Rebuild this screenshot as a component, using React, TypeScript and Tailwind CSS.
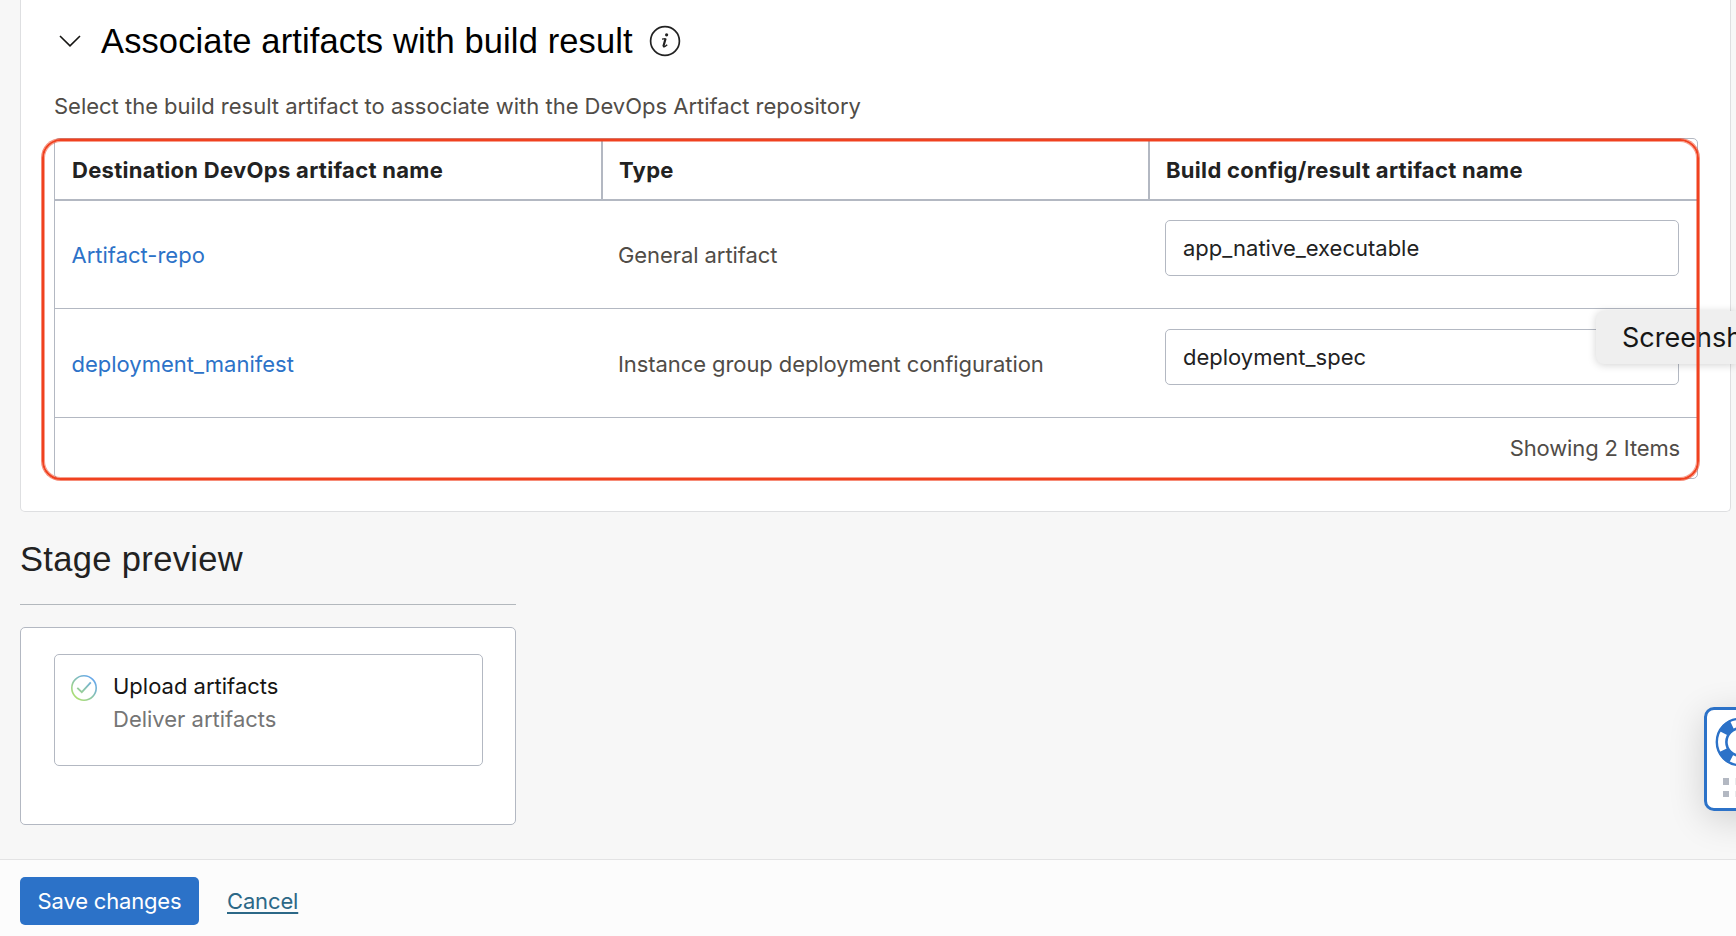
import React from "react";

type Row = { name: string; type: string; value: string; tall?: boolean };

const rows: Row[] = [
  { name: "Artifact-repo", type: "General artifact", value: "app_native_executable" },
  { name: "deployment_manifest", type: "Instance group deployment configuration", value: "deployment_spec", tall: true },
];

function ChevronIcon() {
  return (
    <svg className="h-[12px] w-[22px]" viewBox="0 0 22 12" fill="none" stroke="#161513" strokeWidth="1.6">
      <path d="M1 1 L11 10.8 L21 1" />
    </svg>
  );
}

function InfoIcon() {
  return (
    <svg className="h-8 w-8" viewBox="0 0 32 32" fill="none">
      <circle cx="16" cy="16" r="14.4" stroke="#222" strokeWidth="1.7" />
      <circle cx="17.6" cy="9.8" r="1.6" fill="#222" />
      <path d="M13 14.2 L16.6 13.7" stroke="#222" strokeWidth="1.2" />
      <path d="M16.6 13.5 L14.5 21" stroke="#222" strokeWidth="2.2" />
      <path d="M14.3 20.6 Q14.2 23.4 18.2 19.8" stroke="#222" strokeWidth="1.4" />
    </svg>
  );
}

function CheckIcon() {
  return (
    <svg className="h-[26px] w-[26px] shrink-0" viewBox="0 0 26 26" fill="none">
      <defs>
        <linearGradient id="check" gradientUnits="userSpaceOnUse" x1="4" y1="23" x2="22" y2="3">
          <stop offset="0" stopColor="#aee070" />
          <stop offset="1" stopColor="#64a6ee" />
        </linearGradient>
      </defs>
      <circle cx="13" cy="13" r="12.2" stroke="url(#check)" strokeWidth="1.6" />
      <path d="M6.3 12.8 L10.8 17.2 L19.8 7.4" stroke="url(#check)" strokeWidth="1.8" />
    </svg>
  );
}

function LifebuoyIcon() {
  return (
    <svg className="h-[50px] w-[50px] shrink-0" viewBox="0 0 50 50" fill="none" stroke="#2c72c8">
      <circle cx="25" cy="25" r="18.5" strokeWidth="11" strokeDasharray="11.6 17.46" strokeDashoffset="-8.73" />
      <circle cx="25" cy="25" r="23.2" strokeWidth="2.4" />
      <circle cx="25" cy="25" r="13.6" strokeWidth="2.6" />
    </svg>
  );
}

export default function App() {
  return (
    <div className="relative flex h-[936px] w-full flex-col overflow-hidden bg-[#f7f7f7] font-['Inter','Liberation_Sans',sans-serif] text-[22px] leading-[28px] text-[#504c47]">
      <section className="ml-5 h-[512px] w-[1711px] shrink-0 rounded-b-[5px] border border-t-0 border-[#dedfe1] bg-white pl-[33px]">
        <div className="flex h-[82px] items-center pl-[5px]">
          <ChevronIcon />
          <h2 className="ml-5 w-[534px] whitespace-nowrap font-['Liberation_Sans',sans-serif] text-[34.5px] leading-10 tracking-[0.12px] text-black">
            Associate artifacts with build result
          </h2>
          <div className="ml-[14px]">
            <InfoIcon />
          </div>
        </div>
        <p className="h-14 whitespace-nowrap pt-[10px] tracking-[-0.014px]">
          Select the build result artifact to associate with the DevOps Artifact repository
        </p>
        <div className="h-[341px] w-[1644px] rounded-[5px] border border-[#b3b8c2]">
          <div className="grid h-[62px] grid-cols-[548px_547px_1fr] border-b-2 border-[#b3b8c2] font-bold tracking-[0.3px] text-[#222]">
            <div className="border-r-2 border-[#b3b8c2] pl-[17px] pt-[17px]">Destination DevOps artifact name</div>
            <div className="border-r-2 border-[#b3b8c2] pl-4 pt-[17px]">Type</div>
            <div className="pl-4 pt-[17px]">Build config/result artifact name</div>
          </div>
          {rows.map((r) => (
            <div
              key={r.name}
              className={`grid grid-cols-[547px_548px_1fr] border-b border-[#b3b8c2] ${r.tall ? "h-[109px] pt-5" : "h-[108px] pt-[19px]"}`}
            >
              <a className="pl-[16.5px] pt-[21px] text-[#2c72c8]">{r.name}</a>
              <div className="pl-4 pt-[21px] tracking-[-0.08px]">{r.type}</div>
              <div className="pl-[15px]">
                <div className="flex h-14 w-[514px] items-center rounded-[5px] border border-[#b3b8c2] pl-[17px] text-[#222]">
                  {r.value}
                </div>
              </div>
            </div>
          ))}
          <footer className="pr-[17px] pt-[16px] text-right tracking-[-0.15px]">Showing 2 Items</footer>
        </div>
      </section>

      <section className="ml-5 h-[347px] w-[496px] shrink-0 text-[#222]">
        <h2 className="h-[93px] border-b border-[#b3b8bd] pt-[27px] font-['Liberation_Sans',sans-serif] text-[34.5px] leading-10 tracking-[0.34px]">
          Stage preview
        </h2>
        <div className="mt-[22px] h-[198px] rounded-[5px] border border-[#b3b8c2] bg-white pl-[33px] pt-[26px]">
          <div className="flex h-[112px] w-[429px] rounded-[5px] border border-[#b3b8c2] pl-4 pt-[17px]">
            <div className="pt-[3px]">
              <CheckIcon />
            </div>
            <div className="ml-[16px] leading-[33px] text-[#161513]">
              <div className="-mt-[2px]">Upload artifacts</div>
              <div className="text-[#757575]">Deliver artifacts</div>
            </div>
          </div>
        </div>
      </section>

      <footer className="flex grow items-start border-t border-[#e3e3e4] bg-[#fcfcfc] pl-5 pt-[17px]">
        <button className="h-12 w-[179px] rounded-[5px] bg-[#2c72c8] text-center tracking-[-0.18px] text-white">
          Save changes
        </button>
        <a className="ml-7 mt-[10px] tracking-[-0.15px] text-[#2c6887] underline decoration-2 underline-offset-[3px]">
          Cancel
        </a>
      </footer>

      <div className="absolute left-[1596px] top-[311px] flex h-[53px] w-[140px] items-center rounded-l-[8px] bg-[#efefef] pl-[26px] text-[27px] text-[#161616] shadow-[0_1px_8px_rgba(0,0,0,0.18)]">
        Screensh
      </div>
      <div className="absolute left-[42px] top-[139px] h-[341px] w-[1657px] rounded-[19px] border-2 border-[#f0411f] shadow-[0_0_0_1px_rgba(240,65,31,0.6),inset_0_0_0_1px_rgba(240,65,31,0.5)]" />
      <div className="absolute left-[1704px] top-[707px] h-[104px] w-20 rounded-[10px] border-3 border-[#2c72c8] bg-white pl-[8px] pt-[7px] shadow-[0_8px_36px_rgba(0,0,0,0.16)]">
        <LifebuoyIcon />
        <div className="ml-2 mt-[11px] grid grid-cols-[repeat(3,6px)] gap-[6px]">
          {[0, 1, 2, 3, 4, 5].map((i) => (
            <span key={i} className={i % 3 === 0 ? "h-[6.5px] bg-[#b3b8c2]" : "h-[6.5px] bg-[#e9eaec]"} />
          ))}
        </div>
      </div>
    </div>
  );
}
